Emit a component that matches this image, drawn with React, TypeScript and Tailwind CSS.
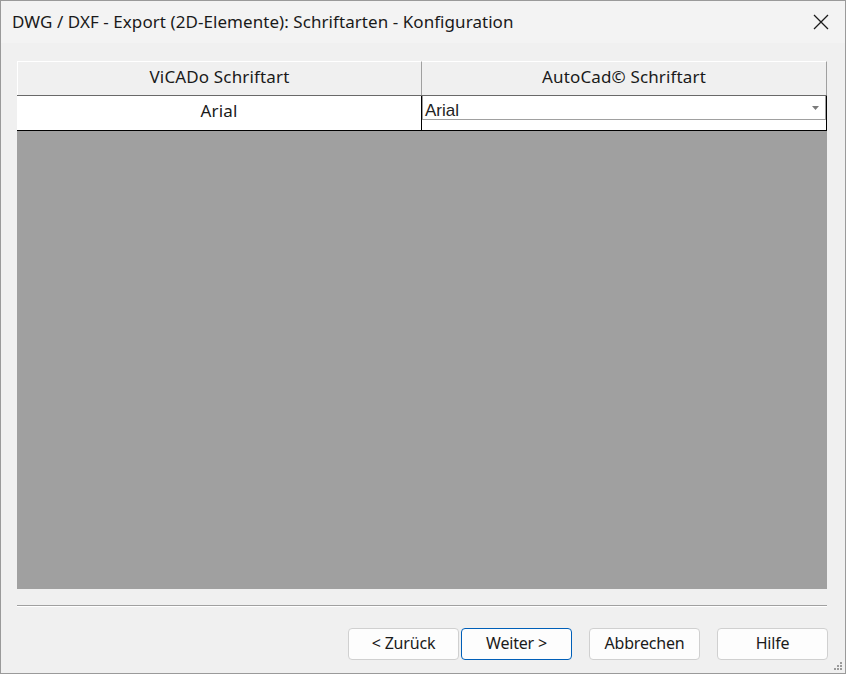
import React from 'react';

const ui = { fontFamily: '"Noto Sans", "Open Sans", sans-serif' };

const DialogButton: React.FC<{ label: string; primary?: boolean; className?: string }> = ({ label, primary, className }) => (
  <button
    className={`h-[32px] w-[111px] rounded-[4px] bg-[#fdfdfd] text-[16px] leading-none pb-[2px] tracking-[-0.2px] text-[#1a1a1a] border ${
      primary ? 'border-[#005fb8]' : 'border-[#d0d0d0]'
    } ${className ?? ''}`}
    style={ui}
  >
    {label}
  </button>
);

export default function App() {
  return (
    <div className="w-[846px] h-[674px] bg-[#f0f0f0] border border-[#9a9a9a] flex flex-col relative" style={ui}>
      {/* title bar */}
      <div className="h-[42px] bg-[#f3f3f3] flex items-center justify-between pl-[11px] pr-[16px]">
        <span className="text-[17px] leading-none pb-[2px] text-[#1a1a1a] tracking-[0.06px]">
          DWG / DXF - Export (2D-Elemente): Schriftarten - Konfiguration
        </span>
        <svg width="16" height="16" viewBox="0 0 16 16" className="text-[#1a1a1a]">
          <path d="M1 1 L15 15 M15 1 L1 15" stroke="currentColor" strokeWidth="1.3" fill="none" />
        </svg>
      </div>

      {/* body */}
      <div className="flex-1 flex flex-col pl-[16px] pr-[18px] pt-[18px]">
        <div className="flex flex-col h-[528px]">
          {/* header */}
          <div className="flex h-[35px] border-b border-[#696969] bg-[#f0f0f0]">
            <div className="w-[404px] border-l border-t border-white flex items-center justify-center pb-[5px] text-[17px] leading-none tracking-[0.15px] text-[#1a1a1a]">
              ViCADo Schriftart
            </div>
            <div className="flex-1 border-l border-[#a0a0a0] border-t border-t-white border-r border-r-[#a0a0a0] flex items-center justify-center pb-[5px] text-[17px] leading-none tracking-[0.15px] text-[#1a1a1a]">
              AutoCad© Schriftart
            </div>
          </div>
          {/* row */}
          <div className="flex h-[35px] bg-white border-b border-black">
            <div className="w-[404px] flex items-center justify-center pb-[6px] text-[17px] leading-none tracking-[0.15px] text-[#1a1a1a]">
              Arial
            </div>
            <div className="flex-1 border-l border-black border-r flex flex-col">
              <div className="h-[24px] border border-[#a0a0a0] border-t-0 flex items-center justify-between pl-[2px] pr-[6px]">
                <span
                  className="text-[17px] leading-none pt-[5px] text-[#222]"
                  style={{ fontFamily: '"Liberation Sans", Arial, sans-serif' }}
                >
                  Arial
                </span>
                <svg width="7" height="4" viewBox="0 0 7 4">
                  <path d="M0 0 L7 0 L3.5 4 Z" fill="#7a7a7a" />
                </svg>
              </div>
            </div>
          </div>
          {/* empty area */}
          <div className="flex-1 bg-[#a0a0a0]" />
        </div>

        {/* separator */}
        <div className="mt-[16px] h-[2px] border-t border-[#a0a0a0] border-b border-b-white" />

        {/* buttons */}
        <div className="flex justify-end mt-[21px] mr-[-1px]">
          <DialogButton label="< Zurück" />
          <DialogButton label="Weiter >" primary className="ml-[2px]" />
          <DialogButton label="Abbrechen" className="ml-[17px]" />
          <DialogButton label="Hilfe" className="ml-[17px]" />
        </div>
      </div>

      {/* resize grip */}
      <svg width="10" height="10" viewBox="0 0 10 10" className="absolute right-[2px] bottom-[2px]">
        <g fill="#9a9a9a">
          <rect x="7" y="1" width="2" height="2" />
          <rect x="4" y="4" width="2" height="2" />
          <rect x="7" y="4" width="2" height="2" />
          <rect x="1" y="7" width="2" height="2" />
          <rect x="4" y="7" width="2" height="2" />
          <rect x="7" y="7" width="2" height="2" />
        </g>
      </svg>
    </div>
  );
}
